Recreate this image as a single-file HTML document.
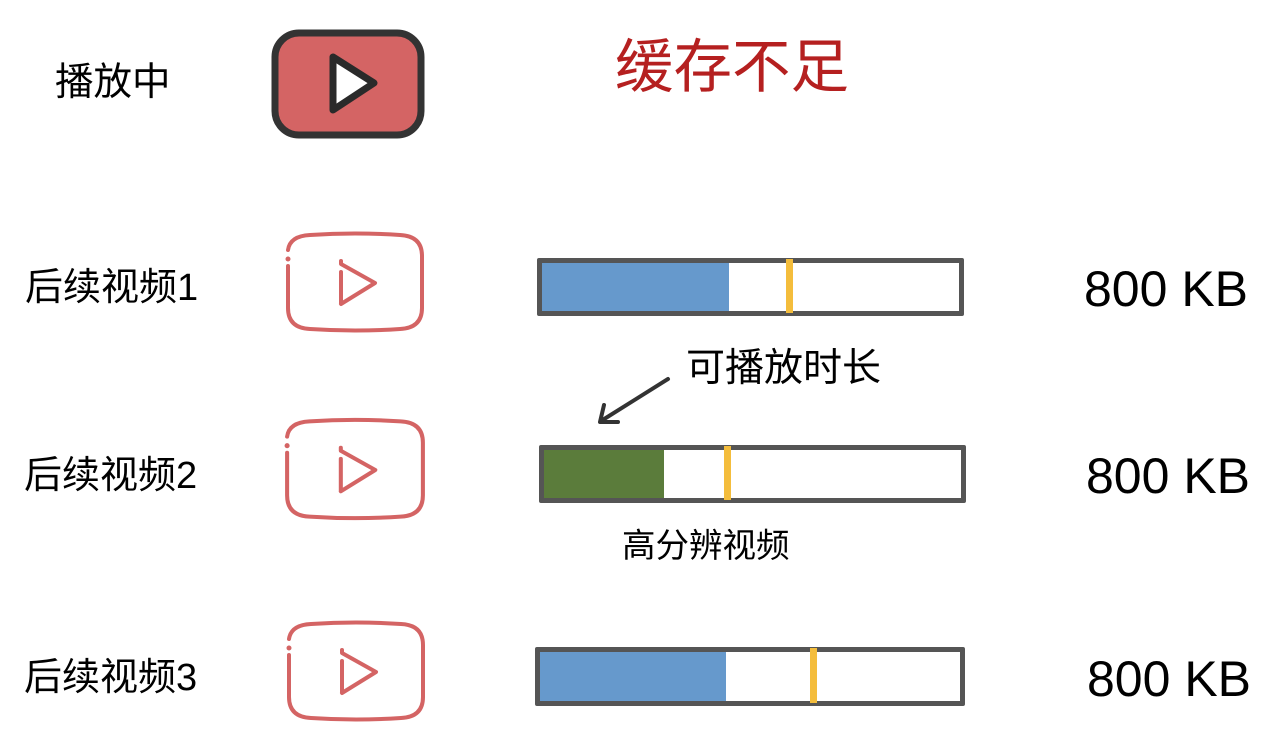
<!DOCTYPE html>
<html><head><meta charset="utf-8"><style>
body{margin:0;width:1280px;height:742px;background:#fff;position:relative;overflow:hidden;font-family:"Liberation Sans","Noto Sans CJK SC",sans-serif;color:#000}
.t{position:absolute;white-space:nowrap;line-height:1}
.bar{position:absolute;border:5px solid #555;box-sizing:border-box;border-radius:2px;background:#fff}
.f{position:absolute;top:0;bottom:0;left:0}
.y{position:absolute;top:-4px;bottom:-2px;width:7px;background:#f4bd3c}
svg{position:absolute}
</style></head><body>
<div class="t" style="left:55px;top:64px;font-size:38.5px">播放中</div>
<div class="t" style="left:615px;top:39px;font-size:58.5px;color:#b52020">缓存不足</div>
<div class="t" style="left:25px;top:269px;font-size:38px">后续视频1</div>
<div class="t" style="left:24px;top:457px;font-size:38px">后续视频2</div>
<div class="t" style="left:24px;top:659px;font-size:38px">后续视频3</div>
<div class="t" style="left:1084px;top:264px;font-size:50px">800 KB</div>
<div class="t" style="left:1086px;top:451px;font-size:50px">800 KB</div>
<div class="t" style="left:1087px;top:654px;font-size:50px">800 KB</div>
<div class="t" style="left:686px;top:349px;font-size:39px">可播放时长</div>
<div class="t" style="left:622px;top:530px;font-size:33.5px">高分辨视频</div>

<svg style="left:268px;top:26px" width="160" height="116" viewBox="0 0 160 116">
<rect x="7" y="7" width="146" height="102" rx="24" fill="#d46464" stroke="#333" stroke-width="7"/>
<path d="M65 31 L65 84 L106 57 Z" fill="#fff" stroke="#2a2a2a" stroke-width="7" stroke-linejoin="round"/>
</svg>

<svg style="left:280px;top:228px" width="150" height="108" viewBox="0 0 150 108">
<g fill="none" stroke="#d46464" stroke-width="4" stroke-linecap="round" stroke-linejoin="round">
<path d="M8 38 L8 80 Q8 100 30 101 Q75 104 120 101 Q142 100 142 80 L142 28 Q142 8 120 7 Q75 4 30 7 Q10 8 8 22"/>
<path d="M61 44 L61 75 M61 33 L61 36 L95 55 L61 76"/>
</g><circle cx="8" cy="31" r="2.5" fill="#d46464"/></svg>
<svg style="left:279px;top:414px" width="152" height="110" viewBox="0 0 150 108">
<g fill="none" stroke="#d46464" stroke-width="4" stroke-linecap="round" stroke-linejoin="round">
<path d="M8 38 L8 80 Q8 100 30 101 Q75 104 120 101 Q142 100 142 80 L142 28 Q142 8 120 7 Q75 4 30 7 Q10 8 8 22"/>
<path d="M61 44 L61 75 M61 33 L61 36 L95 55 L61 76"/>
</g><circle cx="8" cy="31" r="2.5" fill="#d46464"/></svg>
<svg style="left:281px;top:616px" width="150" height="110" viewBox="0 0 150 108">
<g fill="none" stroke="#d46464" stroke-width="4" stroke-linecap="round" stroke-linejoin="round">
<path d="M8 38 L8 80 Q8 100 30 101 Q75 104 120 101 Q142 100 142 80 L142 28 Q142 8 120 7 Q75 4 30 7 Q10 8 8 22"/>
<path d="M61 44 L61 75 M61 33 L61 36 L95 55 L61 76"/>
</g><circle cx="8" cy="31" r="2.5" fill="#d46464"/></svg>

<div class="bar" style="left:537px;top:258px;width:427px;height:58px"><div class="f" style="width:187px;background:#6699cc"></div><div class="y" style="left:244px"></div></div>
<div class="bar" style="left:539px;top:445px;width:427px;height:58px"><div class="f" style="width:120px;background:#5b7c3b"></div><div class="y" style="left:180px"></div></div>
<div class="bar" style="left:535px;top:647px;width:430px;height:59px"><div class="f" style="width:186px;background:#6699cc"></div><div class="y" style="left:270px"></div></div>

<svg style="left:590px;top:370px" width="90" height="60" viewBox="0 0 90 60">
<g fill="none" stroke="#333" stroke-width="4" stroke-linecap="round" stroke-linejoin="round">
<path d="M78 9 L11 51"/><path d="M14 35 L10 52 L28 52"/></g></svg>
</body></html>
